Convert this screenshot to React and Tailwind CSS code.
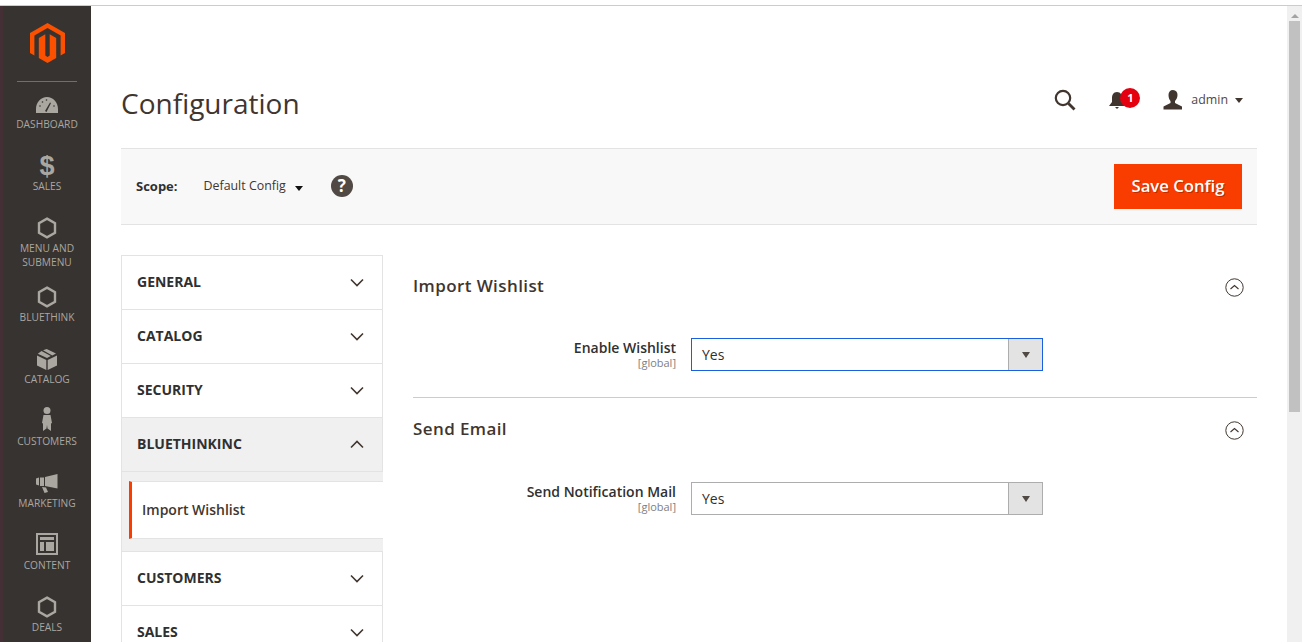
import React from "react";

const Hex = () => (
  <svg width="20" height="22" viewBox="0 0 20 22" fill="none"><path d="M10 1.6 18 6.2v9.6l-8 4.6-8-4.6V6.2z" stroke="#aaa6a0" strokeWidth="2.4" /></svg>
);
const Gauge = () => (
  <svg width="24" height="18" viewBox="0 0 24 18"><path fillRule="evenodd" fill="#aaa6a0" d="M1 17v-4C1 6 6 1 12 1s11 5 11 12v4zM11.500 16l4.500-9-1-.4-5 8.400z" /><circle cx="5" cy="10" r=".8" fill="#373330" /><circle cx="7.500" cy="6" r=".8" fill="#373330" /><circle cx="11.500" cy="4" r=".8" fill="#373330" /><circle cx="19" cy="10" r=".8" fill="#373330" /></svg>
);
const Box = () => (
  <svg width="20" height="21" viewBox="0 0 20 21"><path fill="#aaa6a0" d="M0 6.500 9.300 11v10L0 16.500zM20 6.500 10.700 11v10L20 16.500zM6 1.200 9.700 0 19 4.600 15.300 6.400zM4.500 2 13.800 7 10 9 .8 4.700z" /></svg>
);
const Person = () => (
  <svg width="12" height="24" viewBox="0 0 12 24"><circle cx="6" cy="3.500" r="3.500" fill="#aaa6a0" /><path fill="#aaa6a0" d="M2.500 8h7L11 16l-1 .4V24L6.500 21.500 6 18l-.5 3.500L2 24v-7.600L1 16z" /></svg>
);
const Megaphone = () => (
  <svg width="22" height="20" viewBox="0 0 22 20"><path fill="#aaa6a0" d="M21.500 0v14.500L9 12V3zM0 4.500l3-1v8l-3-1zM4 3.500h4v8.500H4zM6 13l4 .5 2 4.500-3.500 1z" /></svg>
);
const Content = () => (
  <svg width="22" height="22" viewBox="0 0 22 22"><path fillRule="evenodd" fill="#aaa6a0" d="M0 0h22v22H0zM2 2v18h18V2zM4 4h14v3H4zM4 9h4v9H4zM10 9h8v9h-8z" /></svg>
);
const Dollar = () => (
  <span className="text-[27px] leading-[27px] font-bold text-[#aaa6a0] font-['Liberation_Sans',sans-serif]">$</span>
);

const navItems = [
  { label: ["DASHBOARD"], icon: <Gauge />, cls: "h-[62px]", iconCls: "pt-[10px]" },
  { label: ["SALES"], icon: <Dollar />, cls: "h-[62px]", iconCls: "pt-[8px]" },
  { label: ["MENU AND", "SUBMENU"], icon: <Hex />, cls: "h-[69px]", iconCls: "pt-[8px]" },
  { label: ["BLUETHINK"], icon: <Hex />, cls: "h-[62px]", iconCls: "pt-[8px]" },
  { label: ["CATALOG"], icon: <Box />, cls: "h-[62px]", iconCls: "pt-[8px]" },
  { label: ["CUSTOMERS"], icon: <Person />, cls: "h-[62px]", iconCls: "pt-[3px]" },
  { label: ["MARKETING"], icon: <Megaphone />, cls: "h-[62px]", iconCls: "pt-[9px]" },
  { label: ["CONTENT"], icon: <Content />, cls: "h-[62px]", iconCls: "pt-[6px]" },
  { label: ["DEALS"], icon: <Hex />, cls: "h-[62px]", iconCls: "pt-[8px]" },
];

const Chevron = ({ up }) => (
  <svg width="14" height="9" viewBox="0 0 14 9" fill="none" className={up ? "rotate-180" : ""}>
    <path d="M1 1.500 7 7.500l6-6" stroke="#41362f" strokeWidth="1.600" />
  </svg>
);

const Group = ({ name, up }) => (
  <div className={`flex h-[54px] shrink-0 items-center justify-between border-b border-[#e3e3e3] pl-[15px] pr-[18px] ${up ? "bg-[#f0f0f0]" : ""}`}>
    <span className="pb-[2px] text-[14px] font-bold text-[#303030]">{name}</span>
    <Chevron up={up} />
  </div>
);

const CircleUp = () => (
  <svg width="19" height="19" viewBox="0 0 19 19" fill="none" className="mt-[2px]">
    <circle cx="9.500" cy="9.500" r="8.700" stroke="#41362f" strokeWidth="1" />
    <path d="M5.500 11 9.500 7.500l4 3.500" stroke="#41362f" strokeWidth="1.100" />
  </svg>
);

const Select = ({ focused }) => (
  <div className={`flex h-[33px] w-[352px] items-stretch border ${focused ? "border-[#1a5fe0]" : "border-[#adadad]"}`}>
    <span className="flex-1 pl-[10px] text-[14px] leading-[31px] text-[#303030]">Yes</span>
    <span className="flex w-[34px] items-center justify-center border-l border-[#adadad] bg-[#e3e3e3]">
      <span className="h-0 w-0 border-x-[4.500px] border-t-[6px] border-x-transparent border-t-[#514943]" />
    </span>
  </div>
);

const Field = ({ label, focused, cls }) => (
  <div className={`flex items-start ${cls}`}>
    <div className="w-[263px] text-right">
      <div className="text-[14px] font-semibold leading-[19px] text-[#303030]">{label}</div>
      <div className="text-[11px] leading-[11px] text-[#808080]">[global]</div>
    </div>
    <div className="ml-[15px]"><Select focused={focused} /></div>
  </div>
);

const SectionHead = ({ title, cls }) => (
  <div className={`flex h-[24px] items-center justify-between pr-[13px] ${cls}`}>
    <h2 className="text-[17px] font-semibold leading-[24px] tracking-[0.4px] text-[#41362f]">{title}</h2>
    <CircleUp />
  </div>
);

export default function App() {
  return (
    <div className="flex h-[642px] w-[1302px] flex-col overflow-hidden bg-white font-['Open_Sans',sans-serif]">
      <div className="h-[6px] shrink-0 border-b border-[#cccccc] bg-white" />
      <div className="flex min-h-0 flex-1">
        <div className="w-[3px] shrink-0 bg-[#432f35]" />
        <nav className="w-[88px] shrink-0 overflow-hidden bg-[#373330]">
          <div className="flex justify-center pt-[17px]">
            <svg width="35" height="40" viewBox="0 0 35 40">
              <path fill="#fb5000" d="M17.500 0 35 10v20l-4.400 2.500v-20L17.500 5 4.400 12.500v20L0 30V10zM8.800 15l6.500-3.800v21.400l2.200 1.300 2.200-1.300V11.200l6.500 3.800v20L17.500 40l-8.700-5z" />
            </svg>
          </div>
          <div className="mx-[14px] mt-[18px] mb-[1px] h-px bg-[#736e69]" />
          {navItems.map((n) => (
            <div key={n.label[0]} className={`flex shrink-0 flex-col items-center ${n.cls}`}>
              <div className={`flex h-[34px] w-full items-center justify-center ${n.iconCls}`}>{n.icon}</div>
              {n.label.map((l) => (
                <div key={l} className="text-[10.200px] leading-[14px] text-[#aaa6a0]">{l}</div>
              ))}
            </div>
          ))}
        </nav>
        <main className="min-w-0 flex-1 overflow-hidden">
          <header className="flex h-[142px] items-start justify-between pl-[30px] pr-[44px] pt-[77px]">
            <h1 className="text-[28px] font-normal leading-[40px] text-[#41362f]">Configuration</h1>
            <div className="flex items-center pt-[6px]">
              <svg width="22" height="22" viewBox="0 0 22 22" fill="none">
                <circle cx="9" cy="9" r="7.200" stroke="#41362f" strokeWidth="2.200" />
                <path d="m14.500 14.500 6 6" stroke="#41362f" strokeWidth="2.800" />
              </svg>
              <div className="relative ml-[32px] h-[20px] w-[20px]">
                <svg width="18" height="18" viewBox="0 0 18 18" className="mt-[2px]">
                  <path fill="#41362f" d="M9 0c3.500 0 5 3 5 6v4l3 4H1l3-4V6c0-3 1.500-6 5-6zM7 15h4l-2 2z" />
                </svg>
                <span className="absolute left-[12px] top-[-2px] flex h-[20px] w-[20px] items-center justify-center rounded-full bg-[#e5000f] text-[11px] font-bold text-white">1</span>
              </div>
              <svg width="20" height="20" viewBox="0 0 20 20" className="ml-[35px]">
                <path fill="#41362f" d="M10 0c3 0 4.500 2.200 4.500 5s-1.500 5-2.500 6v2l7 3.500V19.500H.500V16.500l7-3.500v-2C6.500 10 5.500 8 5.500 5S7 0 10 0z" />
              </svg>
              <span className="ml-[8px] text-[12.400px] text-[#514943]">admin</span>
              <span className="ml-[7px] h-0 w-0 border-x-[4px] border-t-[5px] border-x-transparent border-t-[#41362f]" />
            </div>
          </header>
          <div className="mx-[30px] flex h-[77px] items-center justify-between border-y border-[#e3e3e3] bg-[#f8f8f8] pl-[15px] pr-[15px]">
            <div className="flex items-center">
              <span className="text-[13px] font-bold text-[#303030]">Scope:</span>
              <span className="ml-[26px] text-[12.400px] text-[#41362f]">Default Config</span>
              <span className="ml-[9px] mt-[3px] h-0 w-0 border-x-[4px] border-t-[5px] border-x-transparent border-t-[#111111]" />
              <span className="mb-[2px] ml-[28px] flex h-[22px] w-[22px] items-center justify-center rounded-full bg-[#514943] text-[17px] font-bold text-white">?</span>
            </div>
            <button className="h-[45px] w-[128px] bg-[#f93c00] pb-[2px] text-[16.700px] font-semibold text-white [text-shadow:1px_1px_0_rgba(0,0,0,0.25)]">Save Config</button>
          </div>
          <div className="flex items-start pl-[30px] pr-[30px] pt-[30px]">
            <aside className="flex w-[262px] shrink-0 flex-col border-x border-t border-[#e3e3e3]">
              <Group name="GENERAL" />
              <Group name="CATALOG" />
              <Group name="SECURITY" />
              <Group name="BLUETHINKINC" up />
              <div className="-mr-px flex flex-col border-b border-[#e3e3e3] bg-[#f0f0f0] pt-[9px] pb-[12px] pl-[7px]">
                <div className="flex h-[58px] items-center border-y border-l-[3px] border-y-[#e3e3e3] border-l-[#f93c00] bg-white pl-[10px]">
                  <span className="pb-[2px] text-[14px] font-semibold text-[#41362f]">Import Wishlist</span>
                </div>
              </div>
              <Group name="CUSTOMERS" />
              <Group name="SALES" />
            </aside>
            <section className="ml-[30px] min-w-0 flex-1 pt-[19px]">
              <SectionHead title="Import Wishlist" />
              <Field label="Enable Wishlist" focused cls="mt-[40px]" />
              <div className="mt-[26px] h-px bg-[#cccccc]" />
              <SectionHead title="Send Email" cls="mt-[19px]" />
              <Field label="Send Notification Mail" cls="mt-[41px]" />
            </section>
          </div>
        </main>
        <div className="flex w-[15px] shrink-0 flex-col items-center bg-[#f0f0f0] pt-[8px]">
          <span className="h-0 w-0 border-x-[4px] border-b-[4px] border-x-transparent border-b-[#a3a3a3]" />
          <div className="mt-[3px] h-[391px] w-[11px] bg-[#c1c1c1]" />
        </div>
      </div>
    </div>
  );
}
